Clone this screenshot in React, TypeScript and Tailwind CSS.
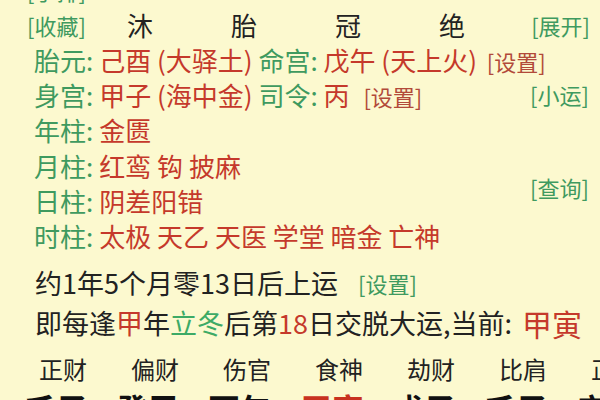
const font = { fontFamily: '"Noto Sans CJK SC", "Noto Sans", sans-serif' };

const G = "text-[#3f9a5f]";
const R = "text-[#c5392b]";
const B = "text-[#b24a3a]";

const rows: { label: string; body: React.ReactNode }[] = [
  {
    label: "胎元",
    body: (
      <>
        <span className={R}>己酉 (大驿土)</span> <span className={G}>命宫:</span>{" "}
        <span className={R}>戊午 (天上火)</span>{" "}
        <span className={`${B} text-[22px] ml-[4px]`}>[设置]</span>
      </>
    ),
  },
  {
    label: "身宫",
    body: (
      <>
        <span className={R}>甲子 (海中金)</span> <span className={G}>司令:</span>{" "}
        <span className={R}>丙</span>{" "}
        <span className={`${B} text-[22px] ml-2`}>[设置]</span>
      </>
    ),
  },
  { label: "年柱", body: <span className={R}>金匮</span> },
  { label: "月柱", body: <span className={R}>红鸾 钩 披麻</span> },
  { label: "日柱", body: <span className={R}>阴差阳错</span> },
  { label: "时柱", body: <span className={R}>太极 天乙 天医 学堂 暗金 亡神</span> },
];

const shishen = ["正财", "偏财", "伤官", "食神", "劫财", "比肩", "正印"];
const ganzhi = ["壬子", "癸丑", "丙午", "甲寅", "戊子", "壬子", "辛亥"];

export default function App() {
  return (
    <div
      className="w-[600px] h-[400px] overflow-hidden bg-[#fcf9cf] text-[#222]"
      style={font}
    >
      {/* clipped row at top */}
      <div className={`h-[36px] mt-[-28px] pl-[27px] flex items-center text-[22px] ${G}`}>
        [手排]
      </div>

      {/* 十二长生 */}
      <div className="h-[34px] pl-[27px] pr-[10px] flex items-center">
        <span className={`w-[61px] text-[22px] ${G}`}>[收藏]</span>
        {["沐", "胎", "冠", "绝"].map((c) => (
          <span key={c} className="w-[104px] text-center text-[26px] text-[#222] leading-none">
            {c}
          </span>
        ))}
        <span className={`ml-auto text-[22px] ${G}`}>[展开]</span>
      </div>

      {/* 神煞 */}
      <div className="flex">
        <div className="w-[520px] pl-[34px]">
          {rows.map((r) => (
            <div key={r.label} className="h-[35.2px] flex items-center whitespace-nowrap text-[26px]">
              <span className={G}>{r.label}:</span>
              <span className="ml-[6px]">{r.body}</span>
            </div>
          ))}
        </div>
        <div className={`w-[80px] pl-[10px] text-[22px] ${G}`}>
          <div className="h-[35px]" />
          <div className="h-[35px] flex items-center">[小运]</div>
          <div className="h-[58px]" />
          <div className="h-[35px] flex items-center">[查询]</div>
        </div>
      </div>

      {/* 起运 */}
      <div className="mt-[10px] h-[40px] pl-[35px] flex items-center whitespace-nowrap text-[27px] text-[#222]">
        约1年5个月零13日后上运
        <span className={`${G} text-[22px] ml-[20px]`}>[设置]</span>
      </div>
      <div className="h-[40px] pl-[35px] flex items-center whitespace-nowrap text-[27px] text-[#222]">
        即每逢<span className={R}>甲</span>年<span className="text-[#3daa66]">立冬</span>后第
        <span className={R}>18</span>日交脱大运,当前:
        <span className={`${R} text-[30px] ml-[10px]`}>甲寅</span>
      </div>

      {/* 十神 */}
      <div className="mt-[8px] h-[36px] pl-[17px] grid grid-cols-[repeat(7,92px)] items-center text-[24px] text-[#222]">
        {shishen.map((s, i) => (
          <span key={i} className="text-center whitespace-nowrap">
            {s}
          </span>
        ))}
      </div>
      <div className="mt-[5px] pl-[10px] grid grid-cols-[repeat(7,92px)] text-[32px] font-bold leading-none">
        {ganzhi.map((s, i) => (
          <span key={i} className={`text-center whitespace-nowrap ${i === 3 ? "text-[#c8321f]" : "text-[#111]"}`}>
            {s}
          </span>
        ))}
      </div>
    </div>
  );
}
